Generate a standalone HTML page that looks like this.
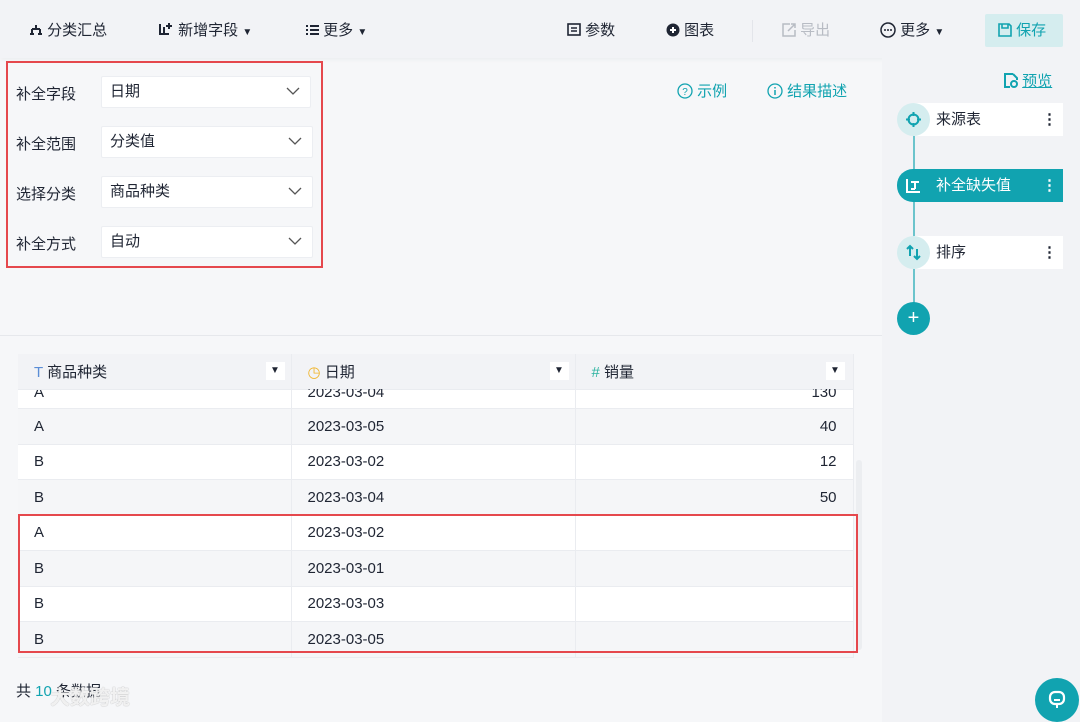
<!DOCTYPE html>
<html><head><meta charset="utf-8"><style>
*{margin:0;padding:0;box-sizing:border-box}
body{width:1080px;height:722px;overflow:hidden;background:#f6f7f9;font-family:"Liberation Sans","Noto Sans CJK SC",sans-serif;color:#1f2533;position:relative;font-size:15px}
.abs{position:absolute}
.top{left:0;top:0;width:1080px;height:58px;background:#f2f3f6;box-shadow:0 2px 4px rgba(0,0,0,.04)}
.tb{position:absolute;top:21px;font-size:15px;line-height:20px;color:#1f2533;white-space:nowrap}
.right{left:882px;top:58px;width:198px;height:664px;background:#f2f3f6}
.lbl{position:absolute;left:16px;font-size:15px}
.sel{position:absolute;left:101px;width:210px;height:32px;background:#fff;border:1px solid #eceef2;border-radius:2px;padding-left:8px;line-height:30px;font-size:15px}
.sel svg{position:absolute;right:10px;top:10px}
.red{position:absolute;border:2px solid #e5484d}
table{position:absolute;left:18px;top:354px;border-collapse:collapse;font-size:15px}
td{height:35.5px;border-right:1px solid #eaecf0;border-bottom:1px solid #eaecf0;padding:0 16px;color:#1f2533}
tr.g td{background:#f5f6f8}
tr.w td{background:#fff}
</style></head><body>
<div class="abs top"></div>
<div class="tb" style="left:29px"><svg width="14" height="12" style="vertical-align:-1px"><path d="M7 1v4M3 5h8M3 5v5M11 5v5M1 10h4M9 10h4" stroke="#1f2533" stroke-width="2" fill="none"/></svg> 分类汇总</div>
<div class="tb" style="left:158px"><svg width="16" height="14" style="vertical-align:-1px"><path d="M2 2v10h9M6 5v7M11 1v6M8 4h6" stroke="#1f2533" stroke-width="2" fill="none"/></svg> 新增字段 <span style="font-size:10px">▼</span></div>
<div class="tb" style="left:305px"><svg width="14" height="12" style="vertical-align:-1px"><path d="M1 2h2M5 2h9M1 6h2M5 6h9M1 10h2M5 10h9" stroke="#1f2533" stroke-width="2"/></svg> 更多 <span style="font-size:10px">▼</span></div>
<div class="tb" style="left:567px"><svg width="14" height="13" style="vertical-align:-1px"><rect x="1" y="1" width="12" height="11" stroke="#1f2533" stroke-width="1.6" fill="none"/><path d="M4 5h6M4 8h6" stroke="#1f2533" stroke-width="1.5"/></svg> 参数</div>
<div class="tb" style="left:666px"><svg width="14" height="14" style="vertical-align:-2px"><circle cx="7" cy="7" r="6.5" fill="#1f2533"/><path d="M7 4v6M4 7h6" stroke="#fff" stroke-width="2"/></svg> 图表</div>
<div class="abs" style="left:752px;top:20px;width:1px;height:22px;background:#e3e5ea"></div>
<div class="tb" style="left:782px;color:#b8bcc4"><svg width="14" height="14" style="vertical-align:-2px"><path d="M8 1H1v12h12V7M6 8l7-7M9 1h4v4" stroke="#b8bcc4" stroke-width="1.5" fill="none"/></svg> 导出</div>
<div class="tb" style="left:880px"><svg width="16" height="16" style="vertical-align:-3px"><circle cx="8" cy="8" r="7" stroke="#1f2533" stroke-width="1.5" fill="none"/><circle cx="5" cy="8" r="1" fill="#1f2533"/><circle cx="8" cy="8" r="1" fill="#1f2533"/><circle cx="11" cy="8" r="1" fill="#1f2533"/></svg> 更多 <span style="font-size:10px">▼</span></div>
<div class="abs" style="left:985px;top:14px;width:78px;height:33px;background:#d5edef;border-radius:2px"></div>
<div class="tb" style="left:998px;color:#11a3b0"><svg width="14" height="14" style="vertical-align:-2px"><path d="M1 1h10l2 2v10H1z M4 1v4h6V1" stroke="#11a3b0" stroke-width="1.6" fill="none"/></svg> 保存</div>

<div class="abs right"></div>
<div class="abs" style="left:0;top:335px;width:882px;height:1px;background:#e6e8ec"></div>

<div class="lbl" style="top:83px">补全字段</div>
<div class="sel" style="top:76px">日期<svg width="14" height="8"><path d="M1 1l6 6 6-6" stroke="#555" stroke-width="1.3" fill="none"/></svg></div>
<div class="lbl" style="top:133px">补全范围</div>
<div class="sel" style="top:126px;width:212px">分类值<svg width="14" height="8"><path d="M1 1l6 6 6-6" stroke="#555" stroke-width="1.3" fill="none"/></svg></div>
<div class="lbl" style="top:183px">选择分类</div>
<div class="sel" style="top:176px;width:212px">商品种类<svg width="14" height="8"><path d="M1 1l6 6 6-6" stroke="#555" stroke-width="1.3" fill="none"/></svg></div>
<div class="lbl" style="top:233px">补全方式</div>
<div class="sel" style="top:226px;width:212px">自动<svg width="14" height="8"><path d="M1 1l6 6 6-6" stroke="#555" stroke-width="1.3" fill="none"/></svg></div>
<div class="red" style="left:6px;top:61px;width:317px;height:207px"></div>

<div class="tb" style="left:677px;top:82px;color:#11a3b0"><svg width="16" height="16" style="vertical-align:-3px"><circle cx="8" cy="8" r="7" stroke="#11a3b0" stroke-width="1.3" fill="none"/><text x="8" y="12" font-size="10" text-anchor="middle" fill="#11a3b0" font-family="Liberation Sans">?</text></svg> 示例</div>
<div class="tb" style="left:767px;top:82px;color:#11a3b0"><svg width="16" height="16" style="vertical-align:-3px"><circle cx="8" cy="8" r="7" stroke="#11a3b0" stroke-width="1.3" fill="none"/><path d="M8 7v5M8 4v1.5" stroke="#11a3b0" stroke-width="1.5"/></svg> 结果描述</div>

<div class="tb" style="left:1004px;top:72px;color:#11a3b0"><svg width="14" height="15" style="vertical-align:-2px"><path d="M9 1H1v13h5M9 1l4 4v2" stroke="#11a3b0" stroke-width="2" fill="none"/><circle cx="10" cy="11" r="3" stroke="#11a3b0" stroke-width="2" fill="none"/></svg> <span style="text-decoration:underline">预览</span></div>
<div class="abs" style="left:913px;top:120px;width:1.5px;height:200px;background:#6cc4cc"></div>
<div class="abs" style="left:914px;top:103px;width:149px;height:33px;background:#fff"></div>
<div class="abs" style="left:897px;top:103px;width:33px;height:33px;border-radius:50%;background:#d5edef"></div>
<svg class="abs" style="left:904px;top:110px" width="19" height="19"><circle cx="9.5" cy="9.5" r="5" stroke="#11a3b0" stroke-width="2" fill="none"/><path d="M9.5 2v4M9.5 13v4M2 9.5h4M13 9.5h4" stroke="#11a3b0" stroke-width="2"/></svg>
<div class="tb" style="left:936px;top:110px">来源表</div>
<div class="tb" style="left:1042px;top:110px;font-weight:bold">⋮</div>
<div class="abs" style="left:897px;top:169px;width:166px;height:33px;background:#11a3b0;border-radius:16px 0 0 16px"></div>
<svg class="abs" style="left:905px;top:177px" width="17" height="17"><path d="M2 2v13h13M6 5h8M10 5v7M6 12h4" stroke="#fff" stroke-width="2" fill="none"/></svg>
<div class="tb" style="left:936px;top:176px;color:#fff">补全缺失值</div>
<div class="tb" style="left:1042px;top:176px;color:#fff;font-weight:bold">⋮</div>
<div class="abs" style="left:914px;top:236px;width:149px;height:33px;background:#fff"></div>
<div class="abs" style="left:897px;top:236px;width:33px;height:33px;border-radius:50%;background:#d5edef"></div>
<svg class="abs" style="left:905px;top:244px" width="17" height="17"><path d="M5 12V2M2 5l3-3 3 3M12 5v10M9 12l3 3 3-3" stroke="#11a3b0" stroke-width="2" fill="none"/></svg>
<div class="tb" style="left:936px;top:243px">排序</div>
<div class="tb" style="left:1042px;top:243px;font-weight:bold">⋮</div>
<div class="abs" style="left:897px;top:302px;width:33px;height:33px;border-radius:50%;background:#11a3b0;color:#fff;text-align:center;line-height:32px;font-size:20px">+</div>

<table>
<tr style="background:#f2f3f6"><td style="width:273px;height:34px;background:#f2f3f6;position:relative"><span style="color:#5b8dd6">T</span> 商品种类<span style="position:absolute;right:6px;top:8px;width:19px;height:18px;background:#fff;font-size:10px;text-align:center;line-height:18px">▼</span></td><td style="width:284px;background:#f2f3f6;position:relative"><span style="color:#f0b429">◷</span> 日期<span style="position:absolute;right:6px;top:8px;width:19px;height:18px;background:#fff;font-size:10px;text-align:center;line-height:18px">▼</span></td><td style="width:278px;background:#f2f3f6;position:relative"><span style="color:#2bb3a0">#</span> 销量<span style="position:absolute;right:8px;top:8px;width:19px;height:18px;background:#fff;font-size:10px;text-align:center;line-height:18px">▼</span></td></tr>
<tr class="w"><td style="height:19px;line-height:6px;vertical-align:top;overflow:hidden">A</td><td style="height:19px;vertical-align:top;line-height:6px">2023-03-04</td><td style="height:19px;text-align:right;vertical-align:top;line-height:6px">130</td></tr>
<tr class="g"><td>A</td><td>2023-03-05</td><td style="text-align:right">40</td></tr>
<tr class="w"><td>B</td><td>2023-03-02</td><td style="text-align:right">12</td></tr>
<tr class="g"><td>B</td><td>2023-03-04</td><td style="text-align:right">50</td></tr>
<tr class="w"><td>A</td><td>2023-03-02</td><td></td></tr>
<tr class="g"><td>B</td><td>2023-03-01</td><td></td></tr>
<tr class="w"><td>B</td><td>2023-03-03</td><td></td></tr>
<tr class="g"><td>B</td><td>2023-03-05</td><td></td></tr>
</table>
<div class="abs" style="left:856px;top:460px;width:6px;height:190px;background:#eceef1;border-radius:3px"></div>
<div class="red" style="left:18px;top:514px;width:840px;height:139px"></div>

<div class="tb" style="left:16px;top:682px">共 <span style="color:#11a3b0">10</span> 条数据</div>
<div class="tb" style="left:50px;top:688px;color:rgba(255,255,255,.85);font-size:20px;font-weight:bold;text-shadow:0 0 1px #999">大数跨境</div>
<div class="abs" style="left:1035px;top:678px;width:44px;height:44px;border-radius:50%;background:#11a3b0"></div>
<svg class="abs" style="left:1046px;top:688px" width="22" height="22"><rect x="4" y="4" width="14" height="12" rx="5" stroke="#fff" stroke-width="2.2" fill="none"/><path d="M8 12h6M11 16v4" stroke="#fff" stroke-width="2"/></svg>
</body></html>
